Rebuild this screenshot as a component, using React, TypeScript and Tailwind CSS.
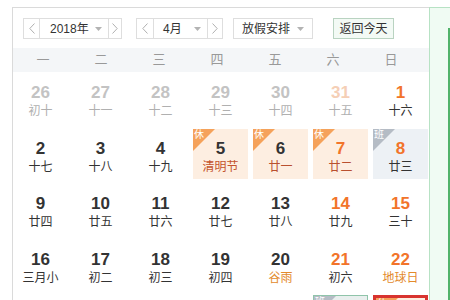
import React from "react";

type Day = {
  n: string;
  l: string;
  nc?: string;
  lc?: string;
  tag?: "xiu" | "ban";
  bg?: string;
  border?: string;
};

const G = "text-[#c3c3c3]";
const GL = "text-[#b0b0b0]";
const D = "text-[#333]";
const O = "text-[#f2742a]";
const HL = "text-[#b9502f]";
const AM = "text-[#e38a2c]";

const days: Day[] = [
  { n: "26", l: "初十", nc: G, lc: GL },
  { n: "27", l: "十一", nc: G, lc: GL },
  { n: "28", l: "十二", nc: G, lc: GL },
  { n: "29", l: "十三", nc: G, lc: GL },
  { n: "30", l: "十四", nc: G, lc: GL },
  { n: "31", l: "十五", nc: "text-[#f5cfb6]", lc: GL },
  { n: "1", l: "十六", nc: O },
  { n: "2", l: "十七" },
  { n: "3", l: "十八" },
  { n: "4", l: "十九" },
  { n: "5", l: "清明节", lc: "text-[#c4532c]", tag: "xiu", bg: "bg-[#fdeee1]" },
  { n: "6", l: "廿一", lc: HL, tag: "xiu", bg: "bg-[#fdeee1]" },
  { n: "7", l: "廿二", nc: O, lc: HL, tag: "xiu", bg: "bg-[#fdeee1]" },
  { n: "8", l: "廿三", nc: O, tag: "ban", bg: "bg-[#edf1f5]" },
  { n: "9", l: "廿四" },
  { n: "10", l: "廿五" },
  { n: "11", l: "廿六" },
  { n: "12", l: "廿七" },
  { n: "13", l: "廿八" },
  { n: "14", l: "廿九", nc: O },
  { n: "15", l: "三十", nc: O },
  { n: "16", l: "三月小" },
  { n: "17", l: "初二" },
  { n: "18", l: "初三" },
  { n: "19", l: "初四" },
  { n: "20", l: "谷雨", lc: AM },
  { n: "21", l: "初六", nc: O },
  { n: "22", l: "地球日", nc: O, lc: AM },
  { n: "23", l: "初七" },
  { n: "24", l: "初八" },
  { n: "25", l: "初九" },
  { n: "26", l: "初十" },
  { n: "27", l: "十一" },
  { n: "28", l: "十二", nc: O, tag: "ban", bg: "bg-[#e9efee]", border: "border border-[#8fc4aa]" },
  { n: "29", l: "十三", nc: O, tag: "xiu", bg: "bg-[#fdeee1]", border: "border-[3px] border-[#d8332f]" },
];

const Chev = ({ dir }: { dir: "l" | "r" }) => (
  <svg width="6" height="11" viewBox="0 0 6 11">
    <polyline
      points={dir === "l" ? "5.5,0.5 0.8,5.5 5.5,10.5" : "0.5,0.5 5.2,5.5 0.5,10.5"}
      fill="none"
      stroke="#b0b0b0"
      strokeWidth="1"
    />
  </svg>
);

const Caret = () => (
  <svg width="7" height="4" viewBox="0 0 7 4">
    <polygon points="0,0 7,0 3.5,4" fill="#b3b3b3" />
  </svg>
);

const Tag = ({ kind }: { kind: "xiu" | "ban" }) => (
  <div className="absolute left-0 top-0 w-[22px] h-[22px]">
    <svg width="22" height="22" viewBox="0 0 22 22" className="absolute left-0 top-0">
      <polygon points="0,0 22,0 0,22" fill={kind === "xiu" ? "#f5a25b" : "#b5bcc5"} />
    </svg>
    <span className="absolute left-[1px] top-[0px] text-[10px] leading-[12px] text-white">
      {kind === "xiu" ? "休" : "班"}
    </span>
  </div>
);

export default function App() {
  return (
    <div
      className="w-[450px] h-[300px] overflow-hidden bg-white"
      style={{ fontFamily: '"Liberation Sans", "Noto Sans CJK SC", sans-serif' }}
    >
      <div className="flex h-full pt-[7px] pl-[12px]">
        <div className="w-[417px] h-full border-t border-l border-[#dadada]">
          {/* controls */}
          <div className="flex items-center pl-[10px] pt-[10px] h-[31px] text-[12px] text-[#333]">
            <div className="flex h-[21px] border border-[#dedede]">
              <div className="w-[16px] flex items-center justify-center border-r border-[#dedede]">
                <Chev dir="l" />
              </div>
              <div className="w-[68px] flex items-center justify-between pl-[10px] pr-[6px]">
                <span>2018年</span>
                <Caret />
              </div>
              <div className="w-[13px] flex items-center justify-center border-l border-[#dedede]">
                <Chev dir="r" />
              </div>
            </div>
            <div className="flex h-[21px] border border-[#dedede] ml-[14px]">
              <div className="w-[17px] flex items-center justify-center border-r border-[#dedede]">
                <Chev dir="l" />
              </div>
              <div className="w-[53px] flex items-center justify-between pl-[9px] pr-[6px]">
                <span>4月</span>
                <Caret />
              </div>
              <div className="w-[15px] flex items-center justify-center border-l border-[#dedede]">
                <Chev dir="r" />
              </div>
            </div>
            <div className="flex h-[21px] w-[80px] items-center justify-between border border-[#dedede] ml-[10px] pl-[8px] pr-[8px]">
              <span>放假安排</span>
              <Caret />
            </div>
            <div className="flex h-[21px] w-[61px] items-center justify-center border border-[#b9d3c1] bg-[#f3faf5] ml-[20px]">
              返回今天
            </div>
          </div>
          {/* week header */}
          <div className="mt-[9px] h-[24px] bg-[#f4f6f8] pl-[1px] grid grid-cols-[repeat(7,58px)] items-center text-[13px] text-[#999]">
            {["一", "二", "三", "四", "五", "六", "日"].map((w) => (
              <div key={w} className="text-center">
                {w}
              </div>
            ))}
          </div>
          {/* days */}
          <div className="mt-[1px] grid grid-cols-[repeat(7,55px)] auto-rows-[50px] gap-x-[5px] gap-y-[5.5px]">
            {days.map((d, i) => (
              <div
                key={i}
                className={`relative flex flex-col items-center box-border ${d.bg ?? ""} ${d.border ?? ""} ${
                  d.border?.includes("3px") ? "pt-[6px]" : d.border ? "pt-[8px]" : "pt-[9px]"
                }`}
              >
                {d.tag && <Tag kind={d.tag} />}
                <div className={`text-[17px] leading-[21px] font-bold ${d.nc ?? D}`}>{d.n}</div>
                <div className={`text-[12px] leading-[15px] mt-[1px] ${d.lc ?? D}`}>{d.l}</div>
              </div>
            ))}
          </div>
        </div>
        {/* right panel */}
        <div className="flex-1 h-full border-t border-l border-[#b7e2c4] bg-[#f0fbf3] flex flex-col">
          <div className="flex justify-end pt-[20px] flex-1">
            <div className="w-[2px] h-full bg-[#52b36a]" />
          </div>
        </div>
      </div>
    </div>
  );
}
